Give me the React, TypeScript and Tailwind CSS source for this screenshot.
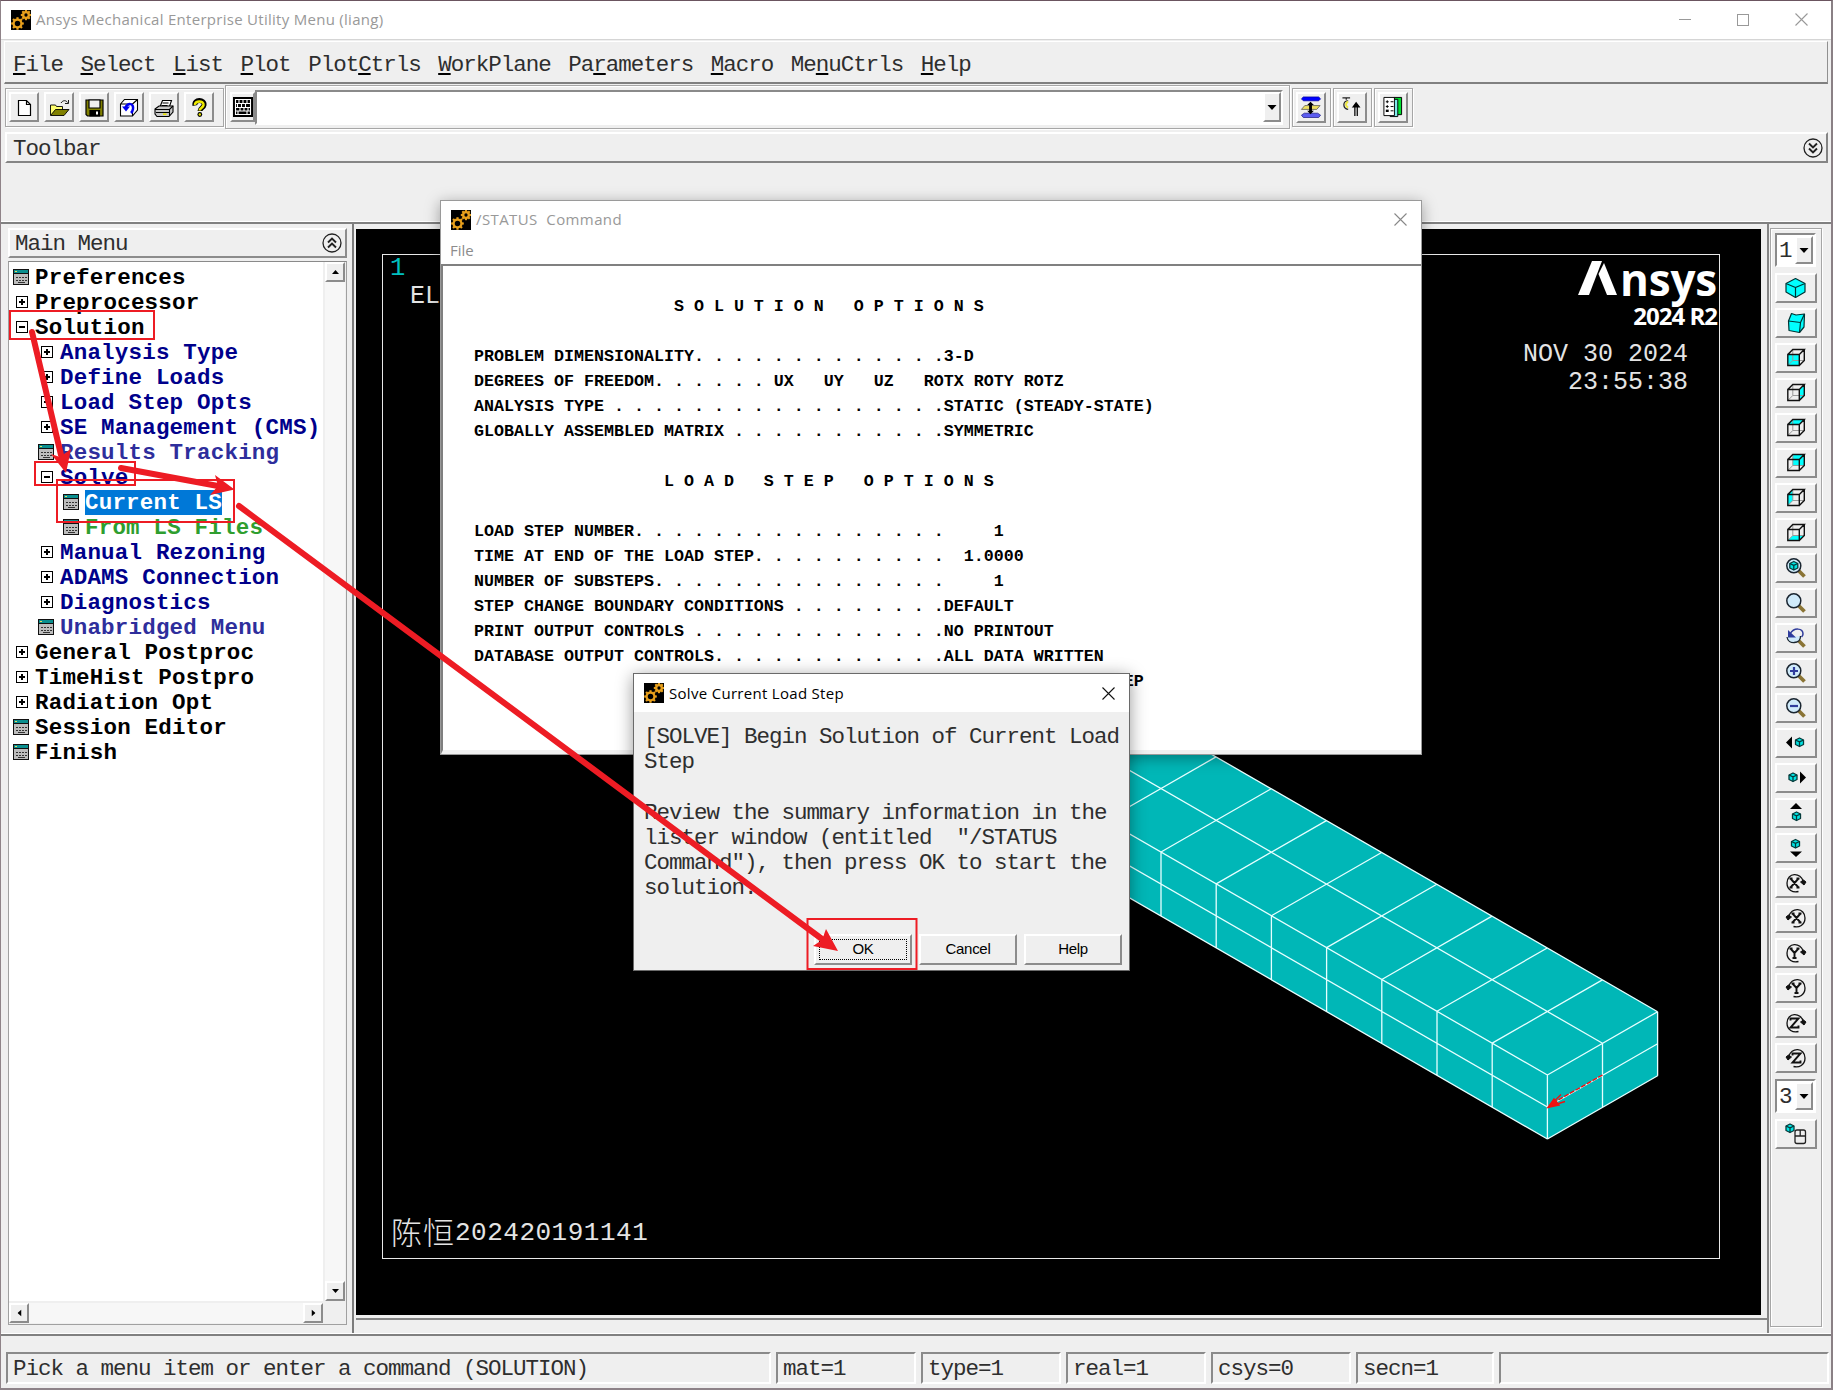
import React from "react";

const mono = "font-['Liberation_Mono','Noto_Sans_CJK_SC',monospace] text-[22.5px] tracking-[-1px] whitespace-pre text-[#2e2e2e]";
const ui = "font-['Open_Sans','Noto_Sans',sans-serif] whitespace-pre";
const raised = "border-2 border-t-white border-l-white border-r-[#8c8c8c] border-b-[#8c8c8c] bg-[#efefef]";
const groove = "border border-[#a6a6a6] shadow-[inset_1px_1px_0_#fff,1px_1px_0_#fff]";
const sunken = "border-2 border-t-[#8a8a8a] border-l-[#8a8a8a] border-r-white border-b-white";

const gearTeeth = [0, 45, 90, 135, 180, 225, 270, 315];

function Gear({ x, y, r }: { x: number; y: number; r: number }) {
  return (
    <g transform={`translate(${x} ${y})`} stroke="#e8a01c" fill="none">
      <circle r={r} strokeWidth="2.3" />
      {gearTeeth.map((a) => (
        <line key={a} x1={r} x2={r + 2.4} y1="0" y2="0" strokeWidth="2.2" transform={`rotate(${a})`} />
      ))}
    </g>
  );
}

function AppIcon() {
  return (
    <svg width="20" height="20" viewBox="0 0 20 20" className="shrink-0 bg-black">
      <Gear x={6.5} y={13.5} r={3.9} />
      <Gear x={15} y={5} r={2.8} />
    </svg>
  );
}

function CloseX({ color }: { color: string }) {
  return (
    <svg width="13" height="13" viewBox="0 0 13 13" stroke={color} strokeWidth="1.1">
      <path d="M.5 .5L12.5 12.5M12.5 .5L.5 12.5" />
    </svg>
  );
}

function TitleBar() {
  return (
    <div className="flex h-[39px] items-center border-b border-[#d5d5d5] bg-white pb-px pl-[10px] pr-[23px]">
      <AppIcon />
      <span className={`${ui} ml-[5px] text-[15px] tracking-[0.28px] text-[#999]`}>Ansys Mechanical Enterprise Utility Menu (liang)</span>
      <div className="ml-auto flex items-center gap-[46px]">
        <div className="h-px w-3 bg-[#999]" />
        <div className="size-3 border border-[#999]" />
        <CloseX color="#999" />
      </div>
    </div>
  );
}

const menus: [string, string, string][] = [
  ["", "F", "ile"], ["", "S", "elect"], ["", "L", "ist"], ["", "P", "lot"], ["Plot", "C", "trls"],
  ["", "W", "orkPlane"], ["Pa", "r", "ameters"], ["", "M", "acro"], ["Me", "n", "uCtrls"], ["", "H", "elp"],
];

function MenuBar() {
  return (
    <div className="ml-[3px] mr-[3px] mt-px flex h-[43px] items-center gap-[17.5px] border-b-2 border-l border-r border-t border-b-[#808080] border-l-white border-r-[#909090] border-t-white pl-2 pt-[7px]">
      {menus.map(([a, k, b]) => (
        <span key={k + b} className={mono}>
          {a}
          <span className="underline decoration-2 underline-offset-[2px] decoration-black">{k}</span>
          {b}
        </span>
      ))}
    </div>
  );
}

const fileIcons: React.ReactNode[] = [
  <path key="n" d="M4.5 3.5h8l4 4v11h-12zM12.5 3.5v4h4" fill="#fff" stroke="#000" strokeWidth="1.2" />,
  <g key="o" stroke="#000" strokeWidth=".9">
    <path d="M1.5 18V8h5l1 1.500h6v4" fill="#ffff70" />
    <path d="M1.500 18.500L6.500 12.500H20L15 18.500z" fill="#808000" />
    <path d="M12 6c2-3 5-3 6.500-.5M19.500 3v3.500H16" fill="none" />
  </g>,
  <g key="s" stroke="#000" strokeWidth="1.2">
    <path d="M2 3h17v16H3.500L2 17.500z" fill="#808000" />
    <path d="M5 3h11v8H5z" fill="#efefef" />
    <path d="M6 13.500h9.500V19H6z" fill="#000" />
    <path d="M13 14.500v3" stroke="#fff" strokeWidth="2" />
  </g>,
  <g key="r" fill="none" stroke="#000" strokeWidth="1.100">
    <path d="M1.500 7L5.500 2.500h13V13l-5 6h-12zM1.500 7h12v12M13.500 7l5-4.500" fill="#fff" />
    <path d="M6.500 10.500C9 5.500 15 6 14 12c-.3 1.500-1 3-2 4" stroke="#0000f0" strokeWidth="2.500" />
    <path d="M3 9.500h8l-4 5z" fill="#0000f0" stroke="none" />
  </g>,
  <g key="p" stroke="#000" strokeWidth="1.100">
    <path d="M5.500 11L8.500 3.500h9L15 11z" fill="#fff" />
    <path d="M8.500 6h6M7.500 8.500h6" />
    <path d="M1 12l4-3h14v6l-4 4.500H3L1 17z" fill="#c8c8c8" />
    <path d="M1 12.500h14.500L19 9M15.500 12.500V19M2 15.500h13" fill="none" />
    <path d="M9 17.200h3.500" stroke="#e8e000" strokeWidth="1.600" />
  </g>,
  <g key="h">
    <path d="M6 8.500C4.500 2 16 2 15 8c-.5 3-4 3-4 6" fill="none" stroke="#000" strokeWidth="5" />
    <path d="M6 8C5.500 3.500 15 3 14.500 8c-.5 3-3.800 3-3.800 5.500" fill="none" stroke="#eeea00" strokeWidth="2.600" />
    <circle cx="10.800" cy="17.500" r="2.400" fill="#000" />
    <circle cx="10.800" cy="17.500" r="1.200" fill="#eeea00" />
  </g>,
];

function DropButton({ className }: { className: string }) {
  return (
    <div className={`flex items-center justify-center ${raised} ${className}`}>
      <svg width="10" height="5" viewBox="0 0 10 5"><path d="M.5 0h9L5 5z" /></svg>
    </div>
  );
}

const rightTools: React.ReactNode[] = [
  <g key="a" strokeWidth=".8">
    <path d="M3 1h16l2 2-2 2H3L1 3z" fill="#0000ff" stroke="#0000a0" />
    <path d="M4.500 10h16l-3.500 4H1z" fill="#eee060" stroke="#555" />
    <path d="M4 18h14l3 2-2 2.500H3L1 20z" fill="#5c5cf0" stroke="#22228a" />
    <path d="M10.500 6l3.500 3.500h-2v6h2L10.500 19 7 15.500h2v-6H7z" fill="#000" />
  </g>,
  <g key="b" fill="none" stroke="#000" strokeWidth="1.300">
    <path d="M1 2h8M5 2v2M7 5c-6 0-6 8 0 9" stroke="#222" />
    <path d="M7 6c-3 1-3 5 0 6" stroke="#eee840" strokeWidth="2" />
    <path d="M14 21V9M16.500 21V9M12 11.500L15.300 7l3.300 4.500z" fill="#000" />
  </g>,
  <g key="c" stroke="#000" strokeWidth="1">
    <path d="M12 1.500h8v18h-8z" fill="#00e030" />
    <path d="M10 3.500h6v18h-8z" fill="#7fe9ea" />
    <path d="M1.500 1.500h11v19h-11z" fill="#fff" />
    <path d="M3.500 6h3M5 4.500v3M8.500 6h3M3.500 11h3M5 9.500v3M8.500 11h3M8.500 15.500h3" />
    <path d="M3.500 15.500h3" strokeWidth="2.500" />
  </g>,
];

function IconBar() {
  return (
    <div className="flex h-[46px] items-center pl-[4px]">
      <div className={`mr-px flex h-[39px] w-[219px] items-center gap-[5px] pl-[3px] ${groove}`}>
        {fileIcons.map((ic, i) => (
          <div key={i} className={`flex size-[30px] items-center justify-center ${raised}`}>
            <svg width="21" height="21" viewBox="0 0 21 21">{ic}</svg>
          </div>
        ))}
      </div>
      <div className={`flex h-[44px] w-[1065px] items-center pl-[4px] ${groove}`}>
        <div className={`flex h-[30px] w-[25px] items-center justify-center ${raised}`}>
          <svg width="20" height="20" viewBox="0 0 20 20" className="shrink-0">
            <path d="M0 0h20v20H0z" />
            <path d="M2.500 2.500h15v15h-15zM2.500 6.500h15M2.500 10.500h15M2.500 14h15M6 2.500v4M10 2.500v4M14 2.500v4M4.500 6.500v4M8.500 6.500v4M12.500 6.500v4M7 10.500v3.500M11 10.500v3.500M15 10.500v3.500M5 14v3.500M14 14v3.500" stroke="#fff" fill="none" strokeWidth="1.100" />
          </svg>
        </div>
        <div className={`flex h-[35px] w-[1028px] items-center justify-end bg-white ${sunken}`}>
          <DropButton className="h-[30px] w-[18px]" />
        </div>
      </div>
      {rightTools.map((ic, i) => (
        <div key={i} className={`ml-[2px] flex h-[39px] w-[39px] items-center pl-[3px] ${groove}`}>
          <div className={`flex h-[31px] w-[30px] items-center justify-center ${raised}`}>
            <svg width="22" height="22" viewBox="0 0 22 23">{ic}</svg>
          </div>
        </div>
      ))}
    </div>
  );
}

function Chevrons({ up }: { up?: boolean }) {
  return (
    <svg width="20" height="20" viewBox="0 0 20 20" fill="none" stroke="#222" className={up ? "" : "rotate-180"}>
      <circle cx="10" cy="10" r="9" strokeWidth="1.300" />
      <path d="M6 9.500l4-4 4 4M6 14.500l4-4 4 4" strokeWidth="1.900" />
    </svg>
  );
}

function FormIcon() {
  return (
    <svg width="16" height="16" viewBox="0 0 16 16" shapeRendering="crispEdges">
      <path d="M0 0h16v16H0z" fill="#111" />
      <path d="M1 1h14v3H1z" fill="#0a8f8f" />
      <path d="M2 2h2v1H2z" fill="#e8e060" />
      <path d="M1 5h14v10H1z" fill="#bdbdbd" />
      <path d="M3 8h2M6 8h2M9 8h2M12 8h2M3 11h2M6 11h2M9 11h2M12 11h2M5 13h7" stroke="#333" strokeWidth="1" />
    </svg>
  );
}

function BoxIcon({ open }: { open: boolean }) {
  return (
    <svg width="12" height="12" viewBox="0 0 12 12" fill="none" stroke="#000" className="ml-[3px]" shapeRendering="crispEdges">
      <path d="M.5 .5h11v11H.5z" />
      <path d={open ? "M3 6h6" : "M3 6h6M6 3v6"} strokeWidth="1.200" />
    </svg>
  );
}

type Row = { t: string; k: "form" | "plus" | "minus"; l: number; c: string };
const tree: Row[] = [
  { t: "Preferences", k: "form", l: 0, c: "text-black" },
  { t: "Preprocessor", k: "plus", l: 0, c: "text-black" },
  { t: "Solution", k: "minus", l: 0, c: "text-black" },
  { t: "Analysis Type", k: "plus", l: 1, c: "text-[#00008b]" },
  { t: "Define Loads", k: "plus", l: 1, c: "text-[#00008b]" },
  { t: "Load Step Opts", k: "plus", l: 1, c: "text-[#00008b]" },
  { t: "SE Management (CMS)", k: "plus", l: 1, c: "text-[#00008b]" },
  { t: "Results Tracking", k: "form", l: 1, c: "text-[#2e2e9c]" },
  { t: "Solve", k: "minus", l: 1, c: "text-[#00008b]" },
  { t: "Current LS", k: "form", l: 2, c: "bg-[#0078d7] text-white" },
  { t: "From LS Files", k: "form", l: 2, c: "text-[#2f9e2f]" },
  { t: "Manual Rezoning", k: "plus", l: 1, c: "text-[#00008b]" },
  { t: "ADAMS Connection", k: "plus", l: 1, c: "text-[#00008b]" },
  { t: "Diagnostics", k: "plus", l: 1, c: "text-[#00008b]" },
  { t: "Unabridged Menu", k: "form", l: 1, c: "text-[#2e2e9c]" },
  { t: "General Postproc", k: "plus", l: 0, c: "text-black" },
  { t: "TimeHist Postpro", k: "plus", l: 0, c: "text-black" },
  { t: "Radiation Opt", k: "plus", l: 0, c: "text-black" },
  { t: "Session Editor", k: "form", l: 0, c: "text-black" },
  { t: "Finish", k: "form", l: 0, c: "text-black" },
];
const indents = ["pl-[4px]", "pl-[29px]", "pl-[54px]"];

function ScrollButton({ turn }: { turn: string }) {
  return (
    <div className={`flex size-[20px] shrink-0 items-center justify-center ${raised}`}>
      <svg width="7" height="4" viewBox="0 0 7 4" className={turn}><path d="M0 4L3.500 0 7 4z" /></svg>
    </div>
  );
}

function MainMenu() {
  return (
    <div className="flex w-[353px] flex-col border-r-2 border-[#7c7c7c] pl-[7px] pr-[5px] pt-[4px]">
      <div className={`flex h-[30px] items-center justify-between pl-[5px] pr-[3px] ${raised}`}>
        <span className={`${mono} pt-[4px]`}>Main Menu</span>
        <Chevrons up />
      </div>
      <div className="mt-[3px] flex h-[1064px] w-[339px] flex-col border border-[#a0a0a0] border-t-[#8a8a8a]">
        <div className="flex h-[1039px]">
          <div className="flex w-[314px] flex-col bg-white pt-[3px]">
            {tree.map((r) => (
              <div key={r.t} className={`flex h-[25px] items-center ${indents[r.l]}`}>
                <span className="-mt-[2px] flex w-[22px] items-center">
                  {r.k === "form" ? <FormIcon /> : <BoxIcon open={r.k === "minus"} />}
                </span>
                <span className={`h-[25px] font-['Liberation_Mono',monospace] text-[22.5px] leading-[27px] font-bold tracking-[0.2px] whitespace-pre ${r.c}`}>{r.t}</span>
              </div>
            ))}
          </div>
          <div className="ml-[2px] flex w-[20px] flex-col justify-between bg-[#f7f7f7]">
            <ScrollButton turn="" />
            <ScrollButton turn="rotate-180" />
          </div>
        </div>
        <div className="mt-[2px] flex w-[314px] justify-between bg-[#f7f7f7]">
          <ScrollButton turn="-rotate-90" />
          <ScrollButton turn="rotate-90" />
        </div>
      </div>
    </div>
  );
}

// Isometric beam geometry, in canvas pixels
const DX = -55.2;
const DY = -31.85;
const N = 12;
const F = [1191.4, 846]; // near top corner
const M = [1246.500, 814.300];
const R = [1301.600, 782.700];
const H = 64;

function Beam() {
  const far = (p: number[], n: number) => [p[0] + DX * n, p[1] + DY * n];
  const seg = (a: number[], b: number[]) => `M${a[0]} ${a[1]}L${b[0]} ${b[1]}`;
  const down = (p: number[], h: number) => [p[0], p[1] + h];
  let d = "";
  for (const p of [F, M, R, down(F, 32), down(F, H)]) d += seg(p, far(p, N));
  for (let i = 0; i <= N; i++) {
    d += seg(far(F, i), far(R, i)) + seg(far(F, i), down(far(F, i), H));
  }
  d += seg(M, down(M, H)) + seg(R, down(R, H)) + seg(down(F, 32), down(R, 32)) + seg(down(F, H), down(R, H));
  const outline = [far(R, N), R, down(R, H), down(F, H), down(far(F, N), H), far(F, N)];
  return (
    <svg width="1405" height="1087" viewBox="0 0 1405 1087" className="absolute left-0 top-0">
      <polygon points={outline.map((p) => p.join(",")).join(" ")} fill="#00b7b7" />
      <path d={d} stroke="#e6ffff" strokeWidth="1.300" fill="none" />
      <g stroke="#f01010" fill="none" strokeWidth="1.400">
        <path d="M1246.500 846L1196 874.500" strokeDasharray="5 1.500" />
        <path d="M1205 865.500L1193 877.500L1209 872.500" />
        <path d="M1192 878.500L1198 870L1203 876z" fill="#f01010" />
      </g>
    </svg>
  );
}

function Canvas() {
  return (
    <div className="flex min-w-0 flex-1 flex-col pl-[2px] pt-[5px]">
      <div className="relative h-[1086px] w-[1405px] overflow-hidden bg-black">
        <div className="absolute left-[26px] top-[25px] h-[1005px] w-[1338px] border border-[#e8e8e8]" />
        <Beam />
        <div className="absolute left-[34px] top-[26px] font-['Liberation_Mono',monospace] text-[25.500px] leading-[28px] text-[#00c0c0]">1</div>
        <div className="absolute left-[54px] top-[54px] font-['Liberation_Mono',monospace] text-[25px] leading-[28px] text-[#e4e4e4]">EL</div>
        <svg width="44" height="36" viewBox="0 0 44 36" className="absolute left-[1221px] top-[31px]" fill="#fff">
          <path d="M1 35L15 1h10L12 35z" />
          <path d="M27 3l13 32H30L21.500 14z" />
        </svg>
        <div className="absolute right-[44px] top-[20px] font-['Open_Sans',sans-serif] text-[44px] font-bold leading-[60px] tracking-[-0.200px] text-white">nsys</div>
        <div className="absolute right-[44px] top-[70px] font-['Open_Sans',sans-serif] text-[24px] font-bold leading-[34px] tracking-[-1px] text-white">2024 R2</div>
        <div className="absolute right-[73px] top-[112px] text-right font-['Liberation_Mono',monospace] text-[25px] leading-[27.500px] text-[#e4e4e4]">
          <div>NOV 30 2024</div>
          <div>23:55:38</div>
        </div>
        <div className="absolute left-[35px] top-[982px] flex items-center font-['Liberation_Mono','Noto_Sans_CJK_SC',monospace] leading-[40px] text-[#e4e4e4]">
          <span className="-mt-[3px] font-['Noto_Sans_CJK_SC',sans-serif] text-[31px] font-light tracking-[1px]">陈恒</span>
          <span className="pt-[2px] text-[26px] tracking-[0.500px]">202420191141</span>
        </div>
      </div>
      <div className="mt-[3px] h-[2px] bg-[#858585]" />
    </div>
  );
}

const cubeFaces = [
  "M.8 6.500h11.500v11H.8z",
  "M12.300 6.500l5-5v11l-5 5z",
  "M.8 6.500l5-5h11.500l-5 5z",
  "M5.800 1.500h11.500v11H5.800z",
  "M.8 6.500l5-5v11l-5 5z",
  "M.8 17.500l5-5h11.500l-5 5z",
];

function FaceCube({ face }: { face: string }) {
  return (
    <g fill="none" transform="translate(1 0)">
      <path d={face} fill="#0ff" />
      <path d="M5.800 2v10.500M5.800 12.500h11M5.800 12.500l-5 5" stroke="#999" />
      <path d="M.8 6.500h11.500v11H.8zM.8 6.500l5-5h11.500l-5 5M17.300 1.500v11l-5 5" stroke="#111" strokeWidth="1.400" />
    </g>
  );
}

function MiniCube({ x, y }: { x: number; y: number }) {
  return (
    <g transform={`translate(${x} ${y})`} stroke="#063b3b" strokeWidth="1.300" strokeLinejoin="round">
      <path d="M4 0l4 2v4.500L4 8.500 0 6.500V2z" fill="#00e5e5" />
      <path d="M0 2l4 1.800L8 2M4 3.800v4.700" fill="none" />
    </g>
  );
}

function Lens({ children }: { children?: React.ReactNode }) {
  return (
    <g>
      <path d="M12.500 12.500l6 6" stroke="#8a7435" strokeWidth="3.800" />
      <circle cx="7.800" cy="7.800" r="7" fill="#cfeafa" stroke="#1a2530" strokeWidth="1.500" />
      {children}
    </g>
  );
}

function Spin({ letter, flip }: { letter: string; flip?: boolean }) {
  return (
    <g fill="none" stroke="#111">
      <g transform={flip ? "translate(20 0) scale(-1 1)" : undefined}>
        <path d="M17.500 9C15-1.500 1-.5 1 10c0 7 6 10 11.500 8.500" strokeWidth="1.300" />
        <path d="M14.500 9l3-2 2.500 2-2 3z" fill="#111" />
      </g>
      <path d={letter} strokeWidth="1.900" transform={flip ? "translate(2 0)" : undefined} />
    </g>
  );
}

const X = "M4.500 5.500L12.500 14.500M12.500 5.500L4.500 14.500M3.500 5.500h3M10.500 5.500h3M3.500 14.500h3M10.500 14.500h3";
const Y = "M4.500 5.500L8.500 10L12.500 5.500M8.500 10V15M3.500 5.500h3M10.500 5.500h3M6.500 15h4";
const Z = "M4.500 7.500V5.500H12.500L4.500 14.500H12.500V12.500";

const viewIcons: React.ReactNode[] = [
  <g key="iso" stroke="#033" strokeWidth="1.200" fill="#0ff" strokeLinejoin="round">
    <path d="M9.500 .5L19 5.500V14L9.500 19.500 0 14V5.500z" />
    <path d="M0 5.500l9.500 4 9.500-4M9.500 9.500v10" />
  </g>,
  <g key="obl" stroke="#033" strokeWidth="1.200" fill="#0ff" strokeLinejoin="round">
    <path d="M5.500 .5L10 2l8.500-1-.5 13-4.500 5.500L3 17.500 2.500 8z" />
    <path d="M2.500 8L14.500 9.500L18.500 1M14.500 9.500l-1 10" fill="none" />
  </g>,
  ...cubeFaces.map((f, i) => <FaceCube key={i} face={f} />),
  <Lens key="fit"><MiniCube x={3.800} y={3.500} /></Lens>,
  <Lens key="zoom" />,
  <g key="back">
    <path d="M12.500 12.500l6 6" stroke="#8a7435" strokeWidth="3.800" />
    <path d="M1 9c1 8 14 7 13.500-1" fill="#cfeafa" stroke="#1a2530" strokeWidth="1.300" />
    <path d="M4 6C8-1 17 0 17 6c0 1-.5 2-1.500 3" fill="none" stroke="#2f3c9c" strokeWidth="1.500" />
    <path d="M2 2v7.500h8z" fill="#2f3c9c" />
  </g>,
  <Lens key="in"><path d="M4 8h8M8 4v8" stroke="#2f3c9c" strokeWidth="2.200" /></Lens>,
  <Lens key="out"><path d="M4 8h8" stroke="#2f3c9c" strokeWidth="2.200" /></Lens>,
  <g key="l"><path d="M0 9.500L6 3.500v12z" /><MiniCube x={9.500} y={5} /></g>,
  <g key="r"><path d="M20 9.500L14 3.500v12z" /><MiniCube x={3} y={5} /></g>,
  <g key="u"><path d="M10 0L4 6h12z" /><MiniCube x={6.500} y={9} /></g>,
  <g key="d"><path d="M10 19L4 13.500h12z" /><MiniCube x={5.500} y={1.500} /></g>,
  <Spin key="x1" letter={X} />,
  <Spin key="x2" letter={X} flip />,
  <Spin key="y1" letter={Y} />,
  <Spin key="y2" letter={Y} flip />,
  <Spin key="z1" letter={Z} />,
  <Spin key="z2" letter={Z} flip />,
];

function ViewCombo({ value }: { value: string }) {
  return (
    <div className={`flex h-[34px] w-[41px] shrink-0 items-center bg-white ${sunken}`}>
      <span className={`${mono} w-[18px] pl-[2px] pt-[3px]`}>{value}</span>
      <DropButton className="h-[28px] w-[18px]" />
    </div>
  );
}

function ViewButton({ children }: { children: React.ReactNode }) {
  return (
    <div className={`flex h-[30px] w-[42px] shrink-0 items-center justify-center ${raised}`}>
      <svg width="20" height="20" viewBox="0 0 20 20" overflow="visible">{children}</svg>
    </div>
  );
}

function ViewPanel() {
  return (
    <div className="flex w-[64px] border-l-2 border-[#858585] pl-px pt-[4px]">
      <div className={`flex h-[1099px] w-[52px] flex-col pl-[4px] pt-[4px] ${groove}`}>
        <ViewCombo value="1" />
        <div className="mt-[6px] flex flex-col gap-[5px]">
          {viewIcons.map((ic, i) => <ViewButton key={i}>{ic}</ViewButton>)}
        </div>
        <div className="mb-[6px] mt-[6px]"><ViewCombo value="3" /></div>
        <ViewButton>
          <MiniCube x={0} y={0} />
          <g fill="#eee" stroke="#222" strokeWidth="1.300">
            <rect x="9" y="6" width="10.500" height="13.500" rx="2" />
            <path d="M9 12h10.500M14.200 6v6" />
          </g>
        </ViewButton>
      </div>
    </div>
  );
}

const cells: [string, string][] = [
  ["Pick a menu item or enter a command (SOLUTION)", "w-[765px]"],
  ["mat=1", "w-[140px]"], ["type=1", "w-[140px]"], ["real=1", "w-[140px]"],
  ["csys=0", "w-[140px]"], ["secn=1", "w-[138px]"], ["", "w-[330px]"],
];

function StatusBar() {
  return (
    <div className="flex h-[32px] gap-[5px] pl-[5px]">
      {cells.map(([t, w], i) => (
        <div key={i} className={`flex items-center pl-[5px] pt-[4px] ${sunken} ${w}`}>
          <span className={mono}>{t}</span>
        </div>
      ))}
    </div>
  );
}

// The dialog covers the last line up to column 65
const listing = `
                    S O L U T I O N   O P T I O N S

PROBLEM DIMENSIONALITY. . . . . . . . . . . . .3-D
DEGREES OF FREEDOM. . . . . . UX   UY   UZ   ROTX ROTY ROTZ
ANALYSIS TYPE . . . . . . . . . . . . . . . . .STATIC (STEADY-STATE)
GLOBALLY ASSEMBLED MATRIX . . . . . . . . . . .SYMMETRIC

                   L O A D   S T E P   O P T I O N S

LOAD STEP NUMBER. . . . . . . . . . . . . . . .     1
TIME AT END OF THE LOAD STEP. . . . . . . . . .  1.0000
NUMBER OF SUBSTEPS. . . . . . . . . . . . . . .     1
STEP CHANGE BOUNDARY CONDITIONS . . . . . . . .DEFAULT
PRINT OUTPUT CONTROLS . . . . . . . . . . . . .NO PRINTOUT
DATABASE OUTPUT CONTROLS. . . . . . . . . . . .ALL DATA WRITTEN
                                                                 EP`;

function StatusWindow() {
  return (
    <div className="absolute left-[439px] top-[199px] flex h-[555px] w-[982px] flex-col border border-[#9a9a9a] bg-white shadow-[0_3px_14px_rgba(0,0,0,0.35)]">
      <div className="flex h-[37px] items-center pl-[10px] pr-[14px]">
        <AppIcon />
        <span className={`${ui} ml-[5px] text-[15px] tracking-[0.4px] text-[#999]`}>/STATUS  Command</span>
        <span className="ml-auto"><CloseX color="#888" /></span>
      </div>
      <div className={`${ui} h-[26px] pl-[9px] text-[15px] leading-[25px] text-[#8c8c8c]`}>File</div>
      <div className="flex-1 overflow-hidden border-b-4 border-l-2 border-t-2 border-b-[#f0f0f0] border-l-[#808080] border-t-[#808080] pl-[31px] pt-[3px]">
        <pre className="m-0 font-['Liberation_Mono',monospace] text-[16.670px] font-bold leading-[25px] text-black">{listing}</pre>
      </div>
    </div>
  );
}

function SolveDialog() {
  return (
    <div className="absolute left-[632px] top-[672px] flex h-[298px] w-[497px] flex-col border border-[#6a6a6a] bg-[#efefef] shadow-[0_3px_16px_rgba(0,0,0,0.4)]">
      <div className="flex h-[38px] items-center bg-white pl-[10px] pr-[14px]">
        <AppIcon />
        <span className={`${ui} ml-[5px] text-[15px] tracking-[0.3px] text-black`}>Solve Current Load Step</span>
        <span className="ml-auto"><CloseX color="#111" /></span>
      </div>
      <div className={`${mono} pl-[10px] pt-[13px] leading-[25.200px]`}>
        {"[SOLVE] Begin Solution of Current Load\nStep\n\nReview the summary information in the\nlister window (entitled  \"/STATUS\nCommand\"), then press OK to start the\nsolution."}
      </div>
      <div className="mb-[5px] ml-[180px] mt-auto flex gap-[7px] font-['Liberation_Sans',sans-serif] text-[15px] tracking-[-0.3px] text-black">
        <div className={`h-[31px] w-[98px] p-[3px] ${raised}`}>
          <div className="flex h-full items-center justify-center border border-dotted border-black">OK</div>
        </div>
        <div className={`flex h-[31px] w-[98px] items-center justify-center ${raised}`}>Cancel</div>
        <div className={`flex h-[31px] w-[98px] items-center justify-center ${raised}`}>Help</div>
      </div>
    </div>
  );
}

function Annotations() {
  return (
    <svg width="1833" height="1390" viewBox="0 0 1833 1390" className="pointer-events-none absolute -left-px -top-px" fill="none" stroke="#ed1c24">
      <g strokeWidth="2">
        <rect x="10" y="311" width="144" height="28" />
        <rect x="35" y="462" width="100" height="23" />
        <rect x="57" y="480" width="177" height="42" />
        <rect x="807.500" y="919" width="109" height="50" />
      </g>
      <g strokeWidth="6" strokeLinecap="round">
        <path d="M32 332L61 455M121 468L218 486M239 506L822 939" />
      </g>
      <g fill="#ed1c24" stroke="none">
        <path d="M66 473L51 454L60 457L71 449z" />
        <path d="M234.500 489.500L210 495L218 486L215 475z" />
        <path d="M838 951L813 946L822 940L826 929z" />
      </g>
    </svg>
  );
}

export default function App() {
  return (
    <div className="relative flex h-[1390px] w-[1833px] flex-col overflow-hidden border-b-2 border-l border-r-2 border-t border-b-[#8d8288] border-l-[#8f8388] border-r-[#8a8085] border-t-[#6b5560] bg-[#efefef]">
      <TitleBar />
      <MenuBar />
      <IconBar />
      <div className="ml-[4px] mr-[3px] mt-[2px] flex h-[31px] items-center justify-between border-2 border-b-[#858585] border-l-white border-r-[#858585] border-t-white pl-[6px] pr-[3px]">
        <span className={`${mono} pt-[4px]`}>Toolbar</span>
        <Chevrons />
      </div>
      <div className="mt-[58px] h-[3px] shrink-0 border-b-2 border-t border-b-[#808080] border-t-white" />
      <div className="flex h-[1109px] shrink-0">
        <MainMenu />
        <Canvas />
        <ViewPanel />
      </div>
      <div className="mb-[16px] h-[3px] shrink-0 border-b-2 border-t border-b-[#808080] border-t-white" />
      <StatusBar />
      <StatusWindow />
      <SolveDialog />
      <Annotations />
    </div>
  );
}
